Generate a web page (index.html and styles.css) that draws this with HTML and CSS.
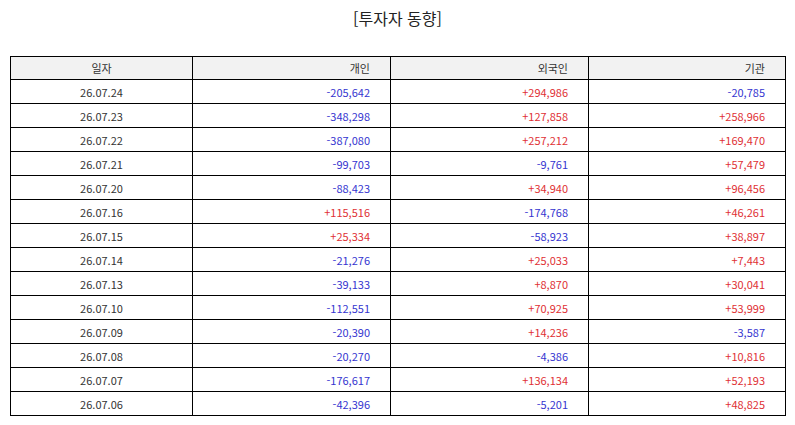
FILE: index.html
```html
<!DOCTYPE html>
<html lang="ko">
<head>
<meta charset="utf-8">
<title>투자자 동향</title>
<link rel="stylesheet" href="styles.css">
</head>
<body>
<div class="page">
  <h1 class="title">[투자자 동향]</h1>
  <table class="grid">
    <colgroup>
      <col class="c-date">
      <col class="c-num">
      <col class="c-num">
      <col class="c-num3">
    </colgroup>
    <thead>
      <tr><th class="center">일자</th><th>개인</th><th>외국인</th><th>기관</th></tr>
    </thead>
    <tbody>
      <tr><td class="center">26.07.24</td><td class="down">-205,642</td><td class="up">+294,986</td><td class="down">-20,785</td></tr>
      <tr><td class="center">26.07.23</td><td class="down">-348,298</td><td class="up">+127,858</td><td class="up">+258,966</td></tr>
      <tr><td class="center">26.07.22</td><td class="down">-387,080</td><td class="up">+257,212</td><td class="up">+169,470</td></tr>
      <tr><td class="center">26.07.21</td><td class="down">-99,703</td><td class="down">-9,761</td><td class="up">+57,479</td></tr>
      <tr><td class="center">26.07.20</td><td class="down">-88,423</td><td class="up">+34,940</td><td class="up">+96,456</td></tr>
      <tr><td class="center">26.07.16</td><td class="up">+115,516</td><td class="down">-174,768</td><td class="up">+46,261</td></tr>
      <tr><td class="center">26.07.15</td><td class="up">+25,334</td><td class="down">-58,923</td><td class="up">+38,897</td></tr>
      <tr><td class="center">26.07.14</td><td class="down">-21,276</td><td class="up">+25,033</td><td class="up">+7,443</td></tr>
      <tr><td class="center">26.07.13</td><td class="down">-39,133</td><td class="up">+8,870</td><td class="up">+30,041</td></tr>
      <tr><td class="center">26.07.10</td><td class="down">-112,551</td><td class="up">+70,925</td><td class="up">+53,999</td></tr>
      <tr><td class="center">26.07.09</td><td class="down">-20,390</td><td class="up">+14,236</td><td class="down">-3,587</td></tr>
      <tr><td class="center">26.07.08</td><td class="down">-20,270</td><td class="down">-4,386</td><td class="up">+10,816</td></tr>
      <tr><td class="center">26.07.07</td><td class="down">-176,617</td><td class="up">+136,134</td><td class="up">+52,193</td></tr>
      <tr><td class="center">26.07.06</td><td class="down">-42,396</td><td class="down">-5,201</td><td class="up">+48,825</td></tr>
    </tbody>
  </table>
</div>
</body>
</html>
```

FILE: styles.css
```css
html, body {
  margin: 0;
  padding: 0;
  background: #ffffff;
}

body {
  font-family: "Noto Sans CJK KR", "Noto Sans", sans-serif;
  color: #333333;
}

.page {
  padding: 6px 10px 0 10px;
}

.title {
  margin: 0;
  height: 50px;
  font-size: 16px;
  font-weight: normal;
  line-height: 24px;
  text-align: center;
  color: #222222;
}

.grid {
  width: 775px;
  border-collapse: collapse;
  table-layout: fixed;
  font-size: 11px;
}

.c-date { width: 182px; }
.c-num { width: 198px; }
.c-num3 { width: 197px; }

.grid th,
.grid td {
  border: 1px solid #000000;
  height: 23px;
  padding: 0 20px 0 4px;
  text-align: right;
  font-weight: normal;
  line-height: 14px;
  vertical-align: middle;
}

.grid th {
  background: #f2f2f2;
  height: 22px;
  color: #333333;
}

.grid .center {
  text-align: center;
  padding: 0;
}

.grid td.up { color: #e03034; }
.grid td.down { color: #3535d0; }
```
